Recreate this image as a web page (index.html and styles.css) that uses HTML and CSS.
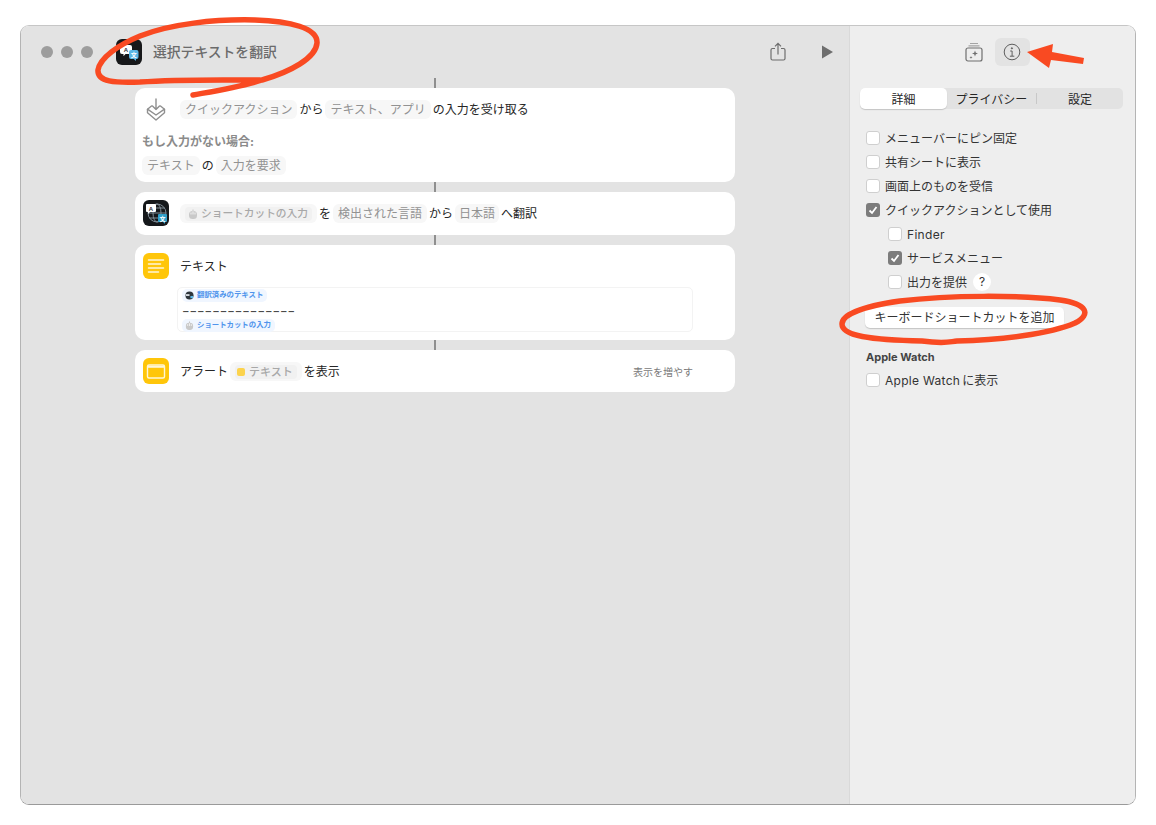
FILE: index.html
```html
<!DOCTYPE html>
<html lang="ja">
<head>
<meta charset="utf-8">
<title>選択テキストを翻訳</title>
<link rel="stylesheet" href="styles.css">
</head>
<body>
<div class="window">
  <main class="main">
    <header class="toolbar">
      <div class="lights"><span class="light"></span><span class="light"></span><span class="light"></span></div>
      <svg class="app-icon" viewBox="0 0 26 26">
        <rect width="26" height="26" rx="6" fill="#17181a"/>
        <path d="M6 6h8a2 2 0 0 1 2 2v5a2 2 0 0 1-2 2H9.500l-2 2.200V15H6a2 2 0 0 1-2-2V8a2 2 0 0 1 2-2z" fill="#fff"/>
        <text x="10" y="13" class="glyph-a">A</text>
        <path d="M15 11h5.500a2 2 0 0 1 2 2v5a2 2 0 0 1-2 2H20v2l-2.200-2H15a2 2 0 0 1-2-2v-5a2 2 0 0 1 2-2z" fill="#5ab6e6"/>
        <text x="17.800" y="18" class="glyph-b">文</text>
      </svg>
      <h1 class="title">選択テキストを翻訳</h1>
      <div class="tools">
        <svg class="share" viewBox="0 0 18 20" fill="none" stroke="#6d6d6d" stroke-width="1.200">
          <path d="M6 6.500H3.500a1.500 1.500 0 0 0-1.500 1.500v8.500A1.500 1.500 0 0 0 3.500 18h11a1.500 1.500 0 0 0 1.500-1.500V8a1.500 1.500 0 0 0-1.500-1.500H12"/>
          <path d="M9 12.500V1.500M6 4.300 9 1.300l3 3"/>
        </svg>
        <svg class="play" viewBox="0 0 11 14"><path d="M0 0.500 11 7 0 13.500z" fill="#6e6e6e"/></svg>
      </div>
    </header>
    <section class="flow">
      <article class="card card-first">
        <div class="row">
          <svg class="icon step-icon" viewBox="0 0 26 26" fill="none" stroke="#8f8f8f" stroke-width="1.400" stroke-linejoin="round" stroke-linecap="round">
            <path d="M8.500 9 4.500 12.200 13 18l8.500-5.800-4-3.200"/>
            <path d="M4.500 12.200v3.600L13 23l8.500-7.200v-3.600"/>
            <path d="M13 2v10.500M9.500 9l3.500 3.500L16.500 9"/>
          </svg>
          <div class="line">
            <span class="token">クイックアクション</span><span>から</span><span class="token">テキスト、アプリ</span><span>の入力を受け取る</span>
          </div>
        </div>
        <p class="sub">もし入力がない場合:</p>
        <div class="line sub-line">
          <span class="token">テキスト</span><span>の</span><span class="token">入力を要求</span>
        </div>
      </article>
      <article class="card card-single">
        <div class="row">
          <svg class="icon" viewBox="0 0 26 26">
            <rect width="26" height="26" rx="6" fill="#15181b"/>
            <g fill="none" stroke="#7f8c96" stroke-width="1">
              <circle cx="14" cy="13" r="9"/><ellipse cx="14" cy="13" rx="4" ry="9"/><path d="M5 13h18M6.500 8h15M6.500 18h15"/>
            </g>
            <path d="M4 4h8a1 1 0 0 1 1 1v6a1 1 0 0 1-1 1H7l-2 2v-2H4a1 1 0 0 1-1-1V5a1 1 0 0 1 1-1z" fill="#fff"/>
            <text x="8" y="10.500" class="glyph-a">A</text>
            <path d="M16 14h7a1 1 0 0 1 1 1v6a1 1 0 0 1-1 1h-1v2l-2-2h-4a1 1 0 0 1-1-1v-6a1 1 0 0 1 1-1z" fill="#2f9fc9"/>
            <text x="19.500" y="21" class="glyph-b">文</text>
          </svg>
          <div class="line">
            <span class="token token-var"><span class="token-inner"><svg class="mini" viewBox="0 0 10 10"><rect x="1" y="2" width="8" height="8" rx="3.500" fill="#c9c9c9"/><path d="M5 0.500v5M3 3.500v2M7 3.500v2" stroke="#fff" stroke-width=".8"/><path d="M5 .5v2" stroke="#c0c0c0"/></svg>ショートカットの入力</span></span><span>を</span><span class="token">検出された言語</span><span>から</span><span class="token token-tight">日本語</span><span>へ翻訳</span>
          </div>
        </div>
      </article>
      <article class="card card-text">
        <div class="row">
          <svg class="icon" viewBox="0 0 26 26">
            <rect width="26" height="26" rx="6" fill="#ffc60a"/>
            <path d="M5.500 7h15M5.500 11h12M5.500 15h15M5.500 19h10" stroke="#fff6d6" stroke-width="1.500" stroke-linecap="round"/>
          </svg>
          <div class="line"><span>テキスト</span></div>
        </div>
        <div class="text-box">
          <div><span class="chip"><svg class="chip-mini" viewBox="0 0 10 10"><circle cx="5" cy="5" r="4.500" fill="#2d353b"/><path d="M1 3.500h4v2H1z" fill="#dfe5ea"/><path d="M6 5.500h3v2.500H6z" fill="#5ab6e6"/></svg>翻訳済みのテキスト</span></div>
          <div class="dashes">−−−−−−−−−−−−−−−</div>
          <div><span class="chip"><svg class="chip-mini" viewBox="0 0 10 10"><rect x="1" y="2" width="8" height="8" rx="3.500" fill="#c9c9c9"/><path d="M5 0.500v5M3 3.500v2M7 3.500v2" stroke="#fff" stroke-width=".8"/><path d="M5 .5v2" stroke="#c0c0c0"/></svg>ショートカットの入力</span></div>
        </div>
      </article>
      <article class="card card-single card-alert">
        <div class="row">
          <svg class="icon" viewBox="0 0 26 26">
            <rect width="26" height="26" rx="6" fill="#ffc60a"/>
            <rect x="4.500" y="7" width="17" height="13" rx="1.500" fill="none" stroke="#fff6d6" stroke-width="1.400"/>
            <path d="M4.500 7.800h17v2h-17z" fill="#fff6d6"/>
          </svg>
          <div class="line">
            <span>アラート</span><span class="token token-var"><span class="token-inner token-inner-wide"><span class="note-dot"></span>テキスト</span></span><span>を表示</span>
          </div>
          <span class="more">表示を増やす</span>
        </div>
      </article>
    </section>
  </main>
  <aside class="side">
    <div class="side-tools">
      <svg class="widget" viewBox="0 0 18 20" fill="none" stroke="#6f6f6f" stroke-width="1.200">
        <path d="M5 1.500h8M3.500 3.800h11" stroke="#a5a5a5"/>
        <rect x="1" y="6" width="16" height="13" rx="2"/>
        <path d="M10 8.500l.8 2.200 2.200.8-2.200.8-.8 2.200-.8-2.200-2.200-.8 2.200-.8zM6 14l.4 1.100 1.100.4-1.100.4L6 17l-.4-1.100-1.100-.4 1.100-.4z" fill="#6f6f6f" stroke="none"/>
      </svg>
      <button class="info-btn" type="button">
        <svg class="info" viewBox="0 0 18 18" fill="none" stroke="#5e5e5e" stroke-width="1">
          <circle cx="9" cy="9" r="7.800"/>
          <path d="M7.200 8h1.900v5M6.900 13.200h4.400"/>
          <circle cx="8.900" cy="5.300" r=".6" fill="#5e5e5e"/>
        </svg>
      </button>
    </div>
    <div class="segments">
      <span class="seg seg-active">詳細</span>
      <span class="seg seg-mid">プライバシー</span>
      <span class="seg-rule"></span>
      <span class="seg seg-last">設定</span>
    </div>
    <ul class="checks">
      <li class="check"><span class="box"></span>メニューバーにピン固定</li>
      <li class="check"><span class="box"></span>共有シートに表示</li>
      <li class="check"><span class="box"></span>画面上のものを受信</li>
      <li class="check"><span class="box box-on"><svg viewBox="0 0 14 14"><path d="M3.500 7.500l2.500 2.500 4.500-6" fill="none" stroke="#fff" stroke-width="1.800"/></svg></span>クイックアクションとして使用</li>
      <li class="check check-sub"><span class="box"></span><span class="latin">Finder</span></li>
      <li class="check check-sub"><span class="box box-on"><svg viewBox="0 0 14 14"><path d="M3.500 7.500l2.500 2.500 4.500-6" fill="none" stroke="#fff" stroke-width="1.800"/></svg></span>サービスメニュー</li>
      <li class="check check-sub"><span class="box"></span>出力を提供<span class="help">?</span></li>
    </ul>
    <button class="shortcut" type="button">キーボードショートカットを追加</button>
    <h2 class="watch">Apple Watch</h2>
    <div class="check"><span class="box"></span><span class="latin latin-gap">Apple Watch</span>に表示</div>
  </aside>
</div>
<svg class="marks" viewBox="0 0 1156 825" fill="none" stroke="#f94a22" stroke-width="5.500" stroke-linecap="round" stroke-linejoin="round">
  <path d="M193 95C215 91 240 87 262 80C290 72 316 58 317 43C318 28 290 21 255 20C215 19 170 24 140 36C118 45 100 58 98 70C97 82 115 83 140 82C180 79 225 80 260 80"/>
  <path d="M922 341C945 344 948 342 957 341C1000 340 1050 334 1075 323C1092 314 1087 304 1060 300C1020 295 950 295 900 301C865 306 842 314 842 324C842 336 870 340 922 341"/>
  <path d="M1027 52 1053 44 1052 52 1084 58 1083 64 1051 60 1049 68Z" fill="#f94a22" stroke="none"/>
</svg>
</body>
</html>
```

FILE: styles.css
```css
* { box-sizing: border-box; }
html, body { margin: 0; padding: 0; }
body {
  background: #fff;
  padding: 25px 20px;
  font-family: "Inter", "Noto Sans CJK JP", sans-serif;
  font-size: 12px;
  line-height: 16px;
  color: #262626;
}
.window {
  display: flex;
  width: 1116px;
  height: 780px;
  border: 1px solid #b4b4b4;
  border-top-color: #c6c6c6;
  border-bottom-color: #9a9a9a;
  border-radius: 9px;
  overflow: hidden;
}
.main {
  width: 829px;
  margin-top: -1px;
  background: #e3e3e3;
  border-right: 1px solid #d9d9d9;
}
.toolbar {
  display: flex;
  align-items: center;
  height: 54px;
  padding: 0 16px 0 20px;
}
.lights { display: flex; gap: 8px; margin-right: 23px; }
.light { width: 12px; height: 12px; border-radius: 50%; background: #9d9d9d; }
.app-icon { width: 26px; height: 26px; margin-right: 11px; }
.glyph-a { font: 700 6px "Liberation Sans", sans-serif; fill: #333; text-anchor: middle; }
.glyph-b { font: 700 6px "Noto Sans CJK JP", sans-serif; fill: #fff; text-anchor: middle; }
.title { margin: 0; font-size: 13.800px; font-weight: 500; color: #6b6b6b; }
.tools { display: flex; align-items: center; gap: 35px; margin-left: auto; }
.share { width: 18px; height: 20px; }
.play { width: 11px; height: 14px; }
.flow {
  display: flex;
  flex-direction: column;
  gap: 10px;
  width: 600px;
  margin: 9px 0 0 114px;
}
.card {
  position: relative;
  background: #fff;
  border-radius: 10px;
  padding: 8px 42px 0 8px;
}
.card::before {
  content: "";
  position: absolute;
  left: 299px;
  top: -10px;
  width: 2px;
  height: 10px;
  background: #8f8f8f;
}
.card-first { height: 94px; padding-top: 11px; }
.card-single { height: 43px; }
.card-alert { height: 42px; }
.card-text { height: 95px; }
.row { display: flex; align-items: center; height: 26px; }
.card-first .row { height: 20px; }
.icon { flex: none; width: 26px; height: 26px; margin-right: 11px; }
.step-icon { margin-top: 1px; }
.line { display: flex; align-items: center; gap: 2px; height: 20px; white-space: nowrap; }
.line > span { padding-top: 2px; }
.token {
  display: inline-flex;
  align-items: center;
  height: 19px;
  padding: 0 5px;
  border-radius: 6px;
  background: #f7f7f7;
  color: #929292;
}
.token-tight { padding: 0 4px; }
.token-inner {
  display: inline-flex;
  align-items: center;
  height: 14px;
  padding: 0 4px 0 2px;
  border-radius: 4px;
  background: #f1f1f1;
  color: #a8a8a8;
  font-size: 10.700px;
  font-weight: 500;
}
.token-inner-wide { font-size: 11px; }
.mini { width: 10px; height: 10px; margin: 0 3px 0 1px; }
.note-dot { width: 8px; height: 8px; margin-right: 4px; border-radius: 2px; background: #fcd34d; }
.sub { margin: 15px 0 5px -1px; font-weight: 700; color: #8b8b8b; }
.sub-line { margin-left: -1px; }
.text-box {
  width: 516px;
  height: 45px;
  margin: 8px 0 0 34px;
  padding: 1px 0 0 4px;
  border: 1px solid #f3f3f3;
  border-radius: 5px;
}
.text-box > div { display: flex; }
.chip {
  display: inline-flex;
  align-items: center;
  height: 13px;
  padding: 0 4px 1px 3px;
  border-radius: 5px;
  background: #f0f6ff;
  color: #4f94ec;
  font-size: 7.400px;
  font-weight: 700;
  line-height: 12px;
}
.chip-mini { width: 9px; height: 9px; margin: 1px 3px 0 0; }
.text-box .dashes { height: 17px; padding-top: 1px; line-height: 16px; font-size: 11.300px; font-weight: 500; color: #4a4a4a; }
.more { margin-left: auto; padding-top: 2px; font-size: 10px; color: #7a7a7a; }
.side { flex: 1; background: #eeeeee; }
.side-tools {
  display: flex;
  align-items: center;
  justify-content: flex-end;
  gap: 12px;
  height: 28px;
  margin-top: 12px;
  padding-right: 105px;
}
.widget { width: 18px; height: 20px; }
.info-btn {
  display: flex;
  align-items: center;
  justify-content: center;
  width: 35px;
  height: 28px;
  padding: 0;
  border: 0;
  border-radius: 6px;
  background: #e3e3e3;
}
.info { width: 18px; height: 18px; margin: -1px 1px 0 0; }
.segments {
  display: flex;
  align-items: center;
  height: 21px;
  margin: 22px 12px 0 10px;
  border-radius: 5px;
  background: #e2e2e2;
}
.seg { padding-top: 2px; text-align: center; }
.seg-active {
  width: 87px;
  height: 21px;
  padding-top: 0;
  line-height: 23px;
  border-radius: 5px;
  background: #fff;
  box-shadow: 0 1px 1px #c4c4c4;
}
.seg-mid { width: 89px; }
.seg-rule { width: 1px; height: 11px; background: #c8c8c8; }
.seg-last { flex: 1; }
.checks { margin: 17px 0 0; padding: 0; list-style: none; }
.check { display: flex; align-items: center; height: 24px; padding: 2px 0 0 16px; color: #333; }
.check-sub { padding-left: 38px; }
.box {
  flex: none;
  width: 14px;
  height: 14px;
  margin: -2px 5px 0 0;
  border: 1px solid #cfcfcf;
  border-radius: 3px;
  background: #fff;
}
.box-on { border: 0; background: #7c7c7c; }
.box-on svg { display: block; width: 14px; height: 14px; }
.latin { letter-spacing: .3px; }
.latin-gap { margin-right: 2px; }
.help {
  width: 18px;
  height: 18px;
  margin: -2px 0 0 6px;
  border-radius: 50%;
  background: #fff;
  font-size: 12px;
  line-height: 18px;
  text-align: center;
}
.shortcut {
  display: block;
  width: 199px;
  height: 21px;
  margin: 13px 0 0 15px;
  padding: 0;
  border: 0;
  border-radius: 5px;
  background: #fff;
  box-shadow: 0 1px 1px #c4c4c4;
  font: inherit;
  color: #333;
}
.watch {
  margin: 22px 0 4px 16px;
  font-size: 11px;
  font-weight: 700;
  line-height: 14px;
  color: #444;
}
.marks {
  position: absolute;
  top: 0;
  left: 0;
  width: 1156px;
  height: 825px;
  pointer-events: none;
}
```
